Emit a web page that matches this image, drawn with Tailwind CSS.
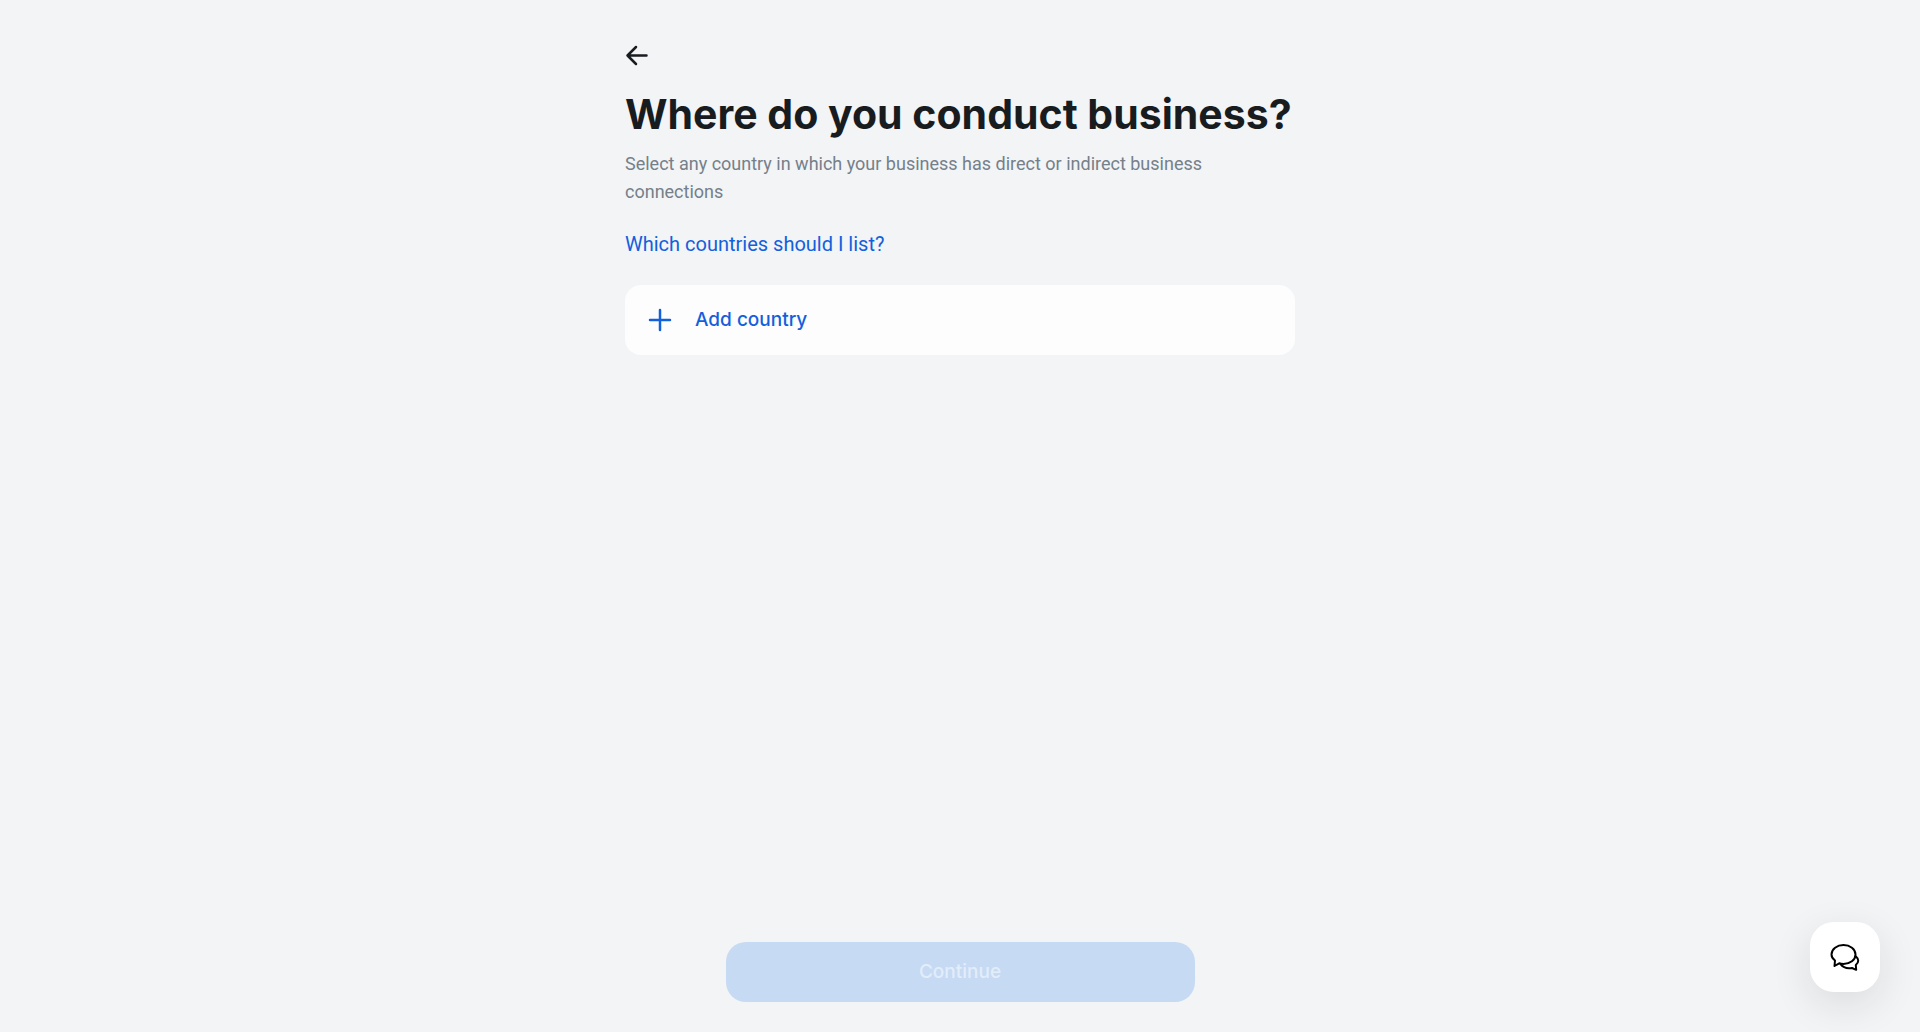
<!DOCTYPE html>
<html lang="en">
<head>
<meta charset="utf-8">
<meta name="viewport" content="width=device-width, initial-scale=1">
<title>Where do you conduct business?</title>
<script src="https://cdn.jsdelivr.net/npm/@tailwindcss/browser@4"></script>
</head>
<body class="flex min-h-screen flex-col bg-[#f2f4f6] font-['Roboto','Inter',sans-serif] text-[#191c1f]">
<main class="mx-auto flex w-full max-w-[670px] grow flex-col items-start pt-11">
  <button type="button" aria-label="Back" class="size-6">
    <svg class="size-6" viewBox="0 0 24 24" fill="none" stroke="currentColor" stroke-width="2.5" stroke-linecap="round" stroke-linejoin="round"><path d="M21.500 11.500H2.500M11 3 2.500 11.500 11 20"/></svg>
  </button>
  <h1 class="mt-5 font-['Inter',sans-serif] text-[41px] leading-[52px] font-bold">Where do you conduct business?</h1>
  <p class="mt-[10px] text-lg leading-7 text-[#75808a]">Select any country in which your business has direct or indirect business connections</p>
  <a href="#" class="mt-6 text-xl leading-7 text-[#1260dc]">Which countries should I list?</a>
  <button type="button" class="mt-[27px] flex h-[70px] w-full items-center gap-[23px] rounded-2xl bg-[#fdfdfd] px-[23px] font-['Inter',sans-serif] text-[19px] font-medium text-[#1260dc]">
    <svg class="size-6" viewBox="0 0 24 24" fill="none" stroke="currentColor" stroke-width="2.500" stroke-linecap="round"><path d="M12 2v20M2 12h20"/></svg>
    Add country
  </button>
</main>
<footer class="flex justify-center pb-[30px]">
  <button type="button" disabled class="h-[60px] w-full max-w-[469px] rounded-[20px] bg-[#c6daf3] font-['Inter',sans-serif] text-[19px] font-medium text-[#e2edfa]">Continue</button>
</footer>
<button type="button" aria-label="Open chat" class="fixed right-10 bottom-10 flex size-[70px] items-center justify-center rounded-3xl bg-white text-black shadow-[0_12px_40px_rgba(25,28,31,0.11)]">
  <svg class="size-[30px]" viewBox="0 0 30 30" fill="none" stroke="currentColor" stroke-width="2" stroke-linejoin="round" stroke-linecap="round"><path d="M13.500 3C20 3 25.500 7 25.500 12.500S20 22 13.500 22c-1.500 0-3-.2-4.300-.7L4.500 24l.5-5.500C3 17 1.500 15 1.500 12.500 1.500 7 7 3 13.500 3Z"/><path d="M26 14.500c3 2.500 3 6-.2 8.500l.4 4.800-4.200-1.800c-4.500.8-9-.5-11.500-3.800"/></svg>
</button>
</body>
</html>
